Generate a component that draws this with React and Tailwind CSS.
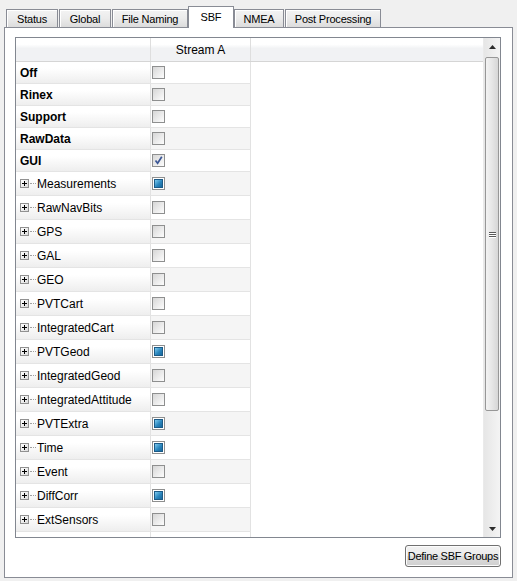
import React from 'react';

const tabs = [
  { label: 'Status', w: 'w-[52px] ml-[2px]' },
  { label: 'Global', w: 'w-[52px] ml-[1px]' },
  { label: 'File Naming', w: 'w-[76px] ml-[1px]' },
  { label: 'SBF', w: 'w-[46px]', active: true },
  { label: 'NMEA', w: 'w-[50px]' },
  { label: 'Post Processing', w: 'w-[96px] ml-[1px]' },
];

const groups = [
  { name: 'Off', bold: true },
  { name: 'Rinex', bold: true },
  { name: 'Support', bold: true },
  { name: 'RawData', bold: true },
  { name: 'GUI', bold: true, state: 'checked' },
  { name: 'Measurements', state: 'partial' },
  { name: 'RawNavBits' },
  { name: 'GPS' },
  { name: 'GAL' },
  { name: 'GEO' },
  { name: 'PVTCart' },
  { name: 'IntegratedCart' },
  { name: 'PVTGeod', state: 'partial' },
  { name: 'IntegratedGeod' },
  { name: 'IntegratedAttitude' },
  { name: 'PVTExtra', state: 'partial' },
  { name: 'Time', state: 'partial' },
  { name: 'Event' },
  { name: 'DiffCorr', state: 'partial' },
  { name: 'ExtSensors' },
  { name: '' },
];

function CheckBox({ state }) {
  return (
    <span className="block w-[13px] h-[13px] border border-[#8e8f8f] bg-[linear-gradient(135deg,#d6d6d6,#fdfdfd)]">
      {state === 'checked' && (
        <svg width="11" height="11" viewBox="0 0 11 11" className="block">
          <path d="M2.5 5.5 L4.6 8.2 L8.8 1.8" fill="none" stroke="#3b5796" strokeWidth="1.7" />
        </svg>
      )}
      {state === 'partial' && (
        <span className="block w-[11px] h-[11px] p-[1px] bg-white">
          <span className="block w-[9px] h-[9px] border border-[#1c5a86] bg-[linear-gradient(135deg,#7fcbef,#2a86bd_55%,#17679c)]" />
        </span>
      )}
    </span>
  );
}

function Expander() {
  return (
    <span className="flex items-center shrink-0">
      <span className="relative w-[9px] h-[9px] border border-[#919191] bg-[linear-gradient(135deg,#ffffff,#dcdcdc)]">
        <span className="absolute left-[1px] top-[3px] w-[5px] h-[1px] bg-black" />
        <span className="absolute left-[3px] top-[1px] w-[1px] h-[5px] bg-black" />
      </span>
      <span className="w-[6px] ml-[1px] border-t border-dotted border-[#a0a0a0]" />
    </span>
  );
}

function Row({ item, index }) {
  const h = index < 5 ? 'h-[22px]' : 'h-[24px]';
  const alt = index % 2 === 1 ? 'bg-[#f5f5f5]' : 'bg-white';
  return (
    <div className={`flex shrink-0 ${h}`}>
      <div className="w-[135px] shrink-0 flex items-center pl-[4px] gap-[1px] border-r border-r-[#e2e2e2] border-b border-b-[#e4e4e4] bg-[linear-gradient(to_bottom,#ffffff_30%,#eeeeee)]">
        {item.bold ? (
          <span className="font-bold">{item.name}</span>
        ) : item.name ? (
          <>
            <Expander />
            <span>{item.name}</span>
          </>
        ) : null}
      </div>
      <div className={`w-[100px] shrink-0 flex items-center pl-[1px] border-r border-r-[#e2e2e2] border-b border-b-[#e4e4e4] ${alt}`}>
        {item.name && <CheckBox state={item.state} />}
      </div>
      <div className="flex-1 bg-white" />
    </div>
  );
}

function ScrollBar() {
  return (
    <div className="w-[17px] shrink-0 flex flex-col bg-[linear-gradient(to_right,#e6e6e6,#f4f4f4)] border-l border-[#eaeaea]">
      <div className="h-[17px] flex items-center justify-center">
        <svg width="7" height="4" viewBox="0 0 7 4"><path d="M3.5 0 L7 4 L0 4 Z" fill="#2c2c2c" /></svg>
      </div>
      <div className="flex-1 px-[1px] pt-[2px] pb-[109px]">
        <div className="h-full rounded-[2px] border border-[#979797] bg-[linear-gradient(to_right,#f3f3f3,#e6e6e6_50%,#d6d6d6)] flex items-center justify-center">
          <div className="flex flex-col gap-[1px]">
            <span className="block w-[7px] h-[1px] bg-[#595959] shadow-[0_1px_0_#ffffff]" />
            <span className="block w-[7px] h-[1px] bg-[#595959] shadow-[0_1px_0_#ffffff]" />
            <span className="block w-[7px] h-[1px] bg-[#595959] shadow-[0_1px_0_#ffffff]" />
          </div>
        </div>
      </div>
      <div className="h-[17px] flex items-center justify-center">
        <svg width="7" height="4" viewBox="0 0 7 4"><path d="M0 0 L7 0 L3.5 4 Z" fill="#2c2c2c" /></svg>
      </div>
    </div>
  );
}

export default function App() {
  return (
    <div className="w-[517px] h-[581px] bg-[#f0f0f0] flex flex-col pt-[6px] px-[4px] pb-[3px] font-['Liberation_Sans',Arial,sans-serif] text-[12px] text-black overflow-hidden">
      {/* tab bar */}
      <div className="flex items-end h-[22px] -mb-px relative z-10 text-[11px] tracking-[-0.2px]">
        {tabs.map((t) =>
          t.active ? (
            <div key={t.label} className={`${t.w} h-[22px] border border-b-0 border-[#898c95] bg-white flex items-center justify-center pb-[1px] whitespace-nowrap`}>
              {t.label}
            </div>
          ) : (
            <div key={t.label} className={`${t.w} h-[18px] mb-[1px] border border-b-0 border-[#898c95] bg-[linear-gradient(to_bottom,#f3f3f3,#ebebeb_50%,#dcdcdc)] shadow-[inset_1px_1px_0_#ffffff] flex items-center justify-center pt-[1px] whitespace-nowrap`}>
              {t.label}
            </div>
          )
        )}
      </div>

      {/* tab pane */}
      <div className="flex-1 border border-[#898c95] bg-white flex flex-col pt-[9px] pl-[10px] pr-[11px] pb-[10px]">
        <div className="h-[501px] shrink-0 border border-[#828790] flex overflow-hidden">
          <div className="flex-1 flex flex-col overflow-hidden">
            <div className="h-[24px] shrink-0 flex border-b border-[#d5d5d5] bg-[linear-gradient(to_bottom,#ffffff_28%,#f1f2f4_45%)]">
              <div className="w-[135px] shrink-0 border-r border-[#dedede]" />
              <div className="w-[100px] shrink-0 border-r border-[#dedede] flex items-center justify-center">Stream A</div>
              <div className="flex-1" />
            </div>
            {groups.map((g, i) => (
              <Row key={i} item={g} index={i} />
            ))}
          </div>
          <ScrollBar />
        </div>
        <div className="flex justify-end mt-[7px]">
          <button className="w-[96px] h-[22px] rounded-[3px] border border-[#707070] bg-[linear-gradient(to_bottom,#f2f2f2,#ebebeb_48%,#dddddd_52%,#cfcfcf)] shadow-[inset_0_0_0_1px_#fcfcfc] text-[11px] tracking-[-0.3px] whitespace-nowrap flex items-center justify-center">
            Define SBF Groups
          </button>
        </div>
      </div>
    </div>
  );
}
